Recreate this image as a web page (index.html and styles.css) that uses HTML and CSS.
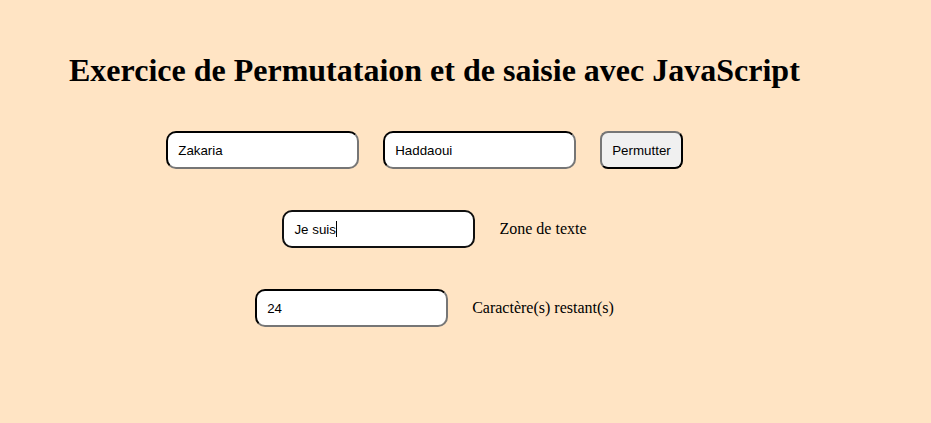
FILE: index.html
```html
<!DOCTYPE html>
<html lang="fr">
<head>
<meta charset="utf-8">
<title>Exercice</title>
<link rel="stylesheet" href="styles.css">
</head>
<body>
<h1 class="title">Exercice de Permutataion et de saisie avec JavaScript</h1>
<main class="main">
  <div class="row">
    <input class="field" type="text" value="Zakaria">
    <input class="field" type="text" value="Haddaoui">
    <button class="btn" type="button">Permutter</button>
  </div>
  <div class="row">
    <div class="field field-focus">Je suis<span class="caret"></span></div>
    <span class="label">Zone de texte</span>
  </div>
  <div class="row">
    <input class="field" type="text" value="24">
    <span class="label">Caractère(s) restant(s)</span>
  </div>
</main>
</body>
</html>
```
FILE: styles.css
```css
html, body {
  margin: 0;
  background: #ffe4c4;
}
body {
  font-family: "Liberation Serif", "Times New Roman", serif;
  color: #000;
  padding: 52px 0 0 69px;
}
.title {
  margin: 0;
  font-size: 32px;
  font-weight: bold;
  line-height: 37px;
}
.main {
  width: 731px;
  padding-top: 42px;
  display: flex;
  flex-direction: column;
  gap: 41px;
}
.row {
  display: flex;
  justify-content: center;
  align-items: center;
  gap: 24px;
}
.field {
  box-sizing: border-box;
  width: 193px;
  height: 38px;
  border: 2px inset #767676;
  border-top-color: #1a1a1a;
  border-left-color: #1a1a1a;
  border-radius: 10px;
  background: #fff;
  padding: 0 10px;
  font-family: "Liberation Sans", Arial, sans-serif;
  font-size: 13.333px;
  color: #000;
  outline: none;
  margin: 0;
}
.field-focus {
  display: flex;
  align-items: center;
  border: 2px solid #101010;
}
.caret {
  display: inline-block;
  width: 1px;
  height: 16px;
  background: #000;
}
.btn {
  box-sizing: border-box;
  height: 38px;
  padding: 0 10px;
  border: 2px outset #767676;
  border-bottom-color: #111;
  border-right-color: #111;
  border-radius: 8px;
  background: #f0f0f0;
  font-family: "Liberation Sans", Arial, sans-serif;
  font-size: 13.333px;
  color: #000;
  margin: 0;
}
.label {
  font-size: 16px;
}
.row:first-child {
  padding-right: 20px;
}
```
